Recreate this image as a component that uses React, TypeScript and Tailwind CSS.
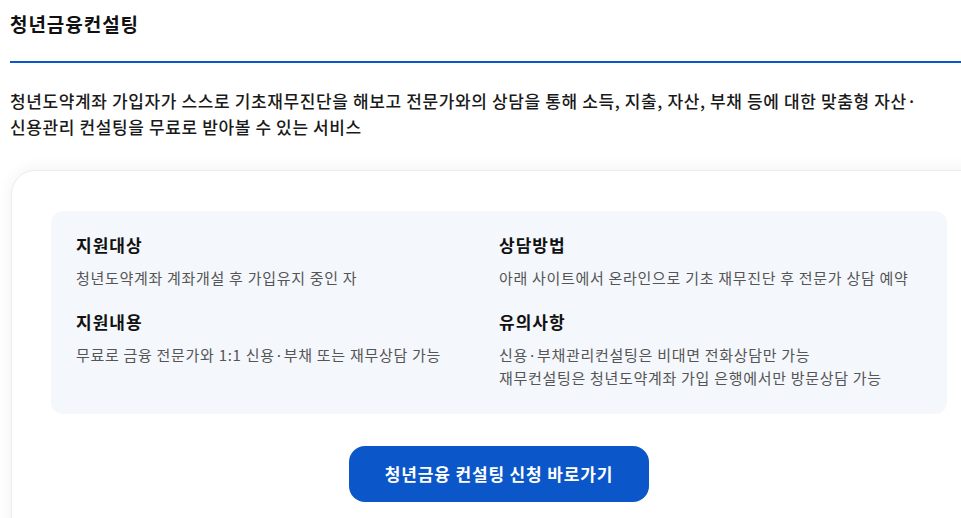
import React from 'react';

const items = [
  { title: '지원대상', lines: ['청년도약계좌 계좌개설 후 가입유지 중인 자'] },
  { title: '상담방법', lines: ['아래 사이트에서 온라인으로 기초 재무진단 후 전문가 상담 예약'] },
  { title: '지원내용', lines: ['무료로 금융 전문가와 1:1 신용·부채 또는 재무상담 가능'] },
  {
    title: '유의사항',
    lines: ['신용·부채관리컨설팅은 비대면 전화상담만 가능', '재무컨설팅은 청년도약계좌 가입 은행에서만 방문상담 가능'],
  },
];

export default function App() {
  return (
    <div className="w-full h-[518px] overflow-hidden bg-white font-['Noto_Sans_CJK_KR','Noto_Sans',sans-serif] text-[#111]">
      <div className="w-[1000px] pl-[10px]">
        {/* page title */}
        <h1 className="pt-[10px] text-[19px] leading-[27px] font-bold tracking-[0.05em]">청년금융컨설팅</h1>
        <div className="mt-6 h-[2px] bg-[#0b57c9]" />

        <p className="mt-[25px] text-[17px] leading-[26px] font-medium tracking-[0.62px] text-[#1a1a1a]">
          청년도약계좌 가입자가 스스로 기초재무진단을 해보고 전문가와의 상담을 통해 소득, 지출, 자산, 부채 등에 대한 맞춤형 자산·
          <br />
          신용관리 컨설팅을 무료로 받아볼 수 있는 서비스
        </p>

        {/* card */}
        <div className="mt-[30px] ml-px w-[976px] h-[400px] rounded-3xl border border-[#ececec] bg-white pt-10 px-[39px] shadow-[0_0_18px_rgba(0,0,0,0.06)]">
          <div className="rounded-xl bg-[#f4f7fc] pt-[23px] pb-[25px] px-[25px] grid grid-cols-2 gap-y-[22px]">
            {items.map((item) => (
              <div key={item.title}>
                <div className="text-[17px] leading-[22px] font-bold tracking-[1px] text-[#111]">{item.title}</div>
                <div className="mt-[10px] text-[15px] leading-[23px] tracking-[0.7px] text-[#555]">
                  {item.lines.map((l) => (
                    <div key={l}>{l}</div>
                  ))}
                </div>
              </div>
            ))}
          </div>

          <div className="flex justify-center mt-[32px]">
            <button className="w-[300px] h-[56px] rounded-2xl bg-[#0b57c9] text-white text-[17px] font-bold tracking-[0.85px]">
              청년금융 컨설팅 신청 바로가기
            </button>
          </div>
        </div>
      </div>
    </div>
  );
}
